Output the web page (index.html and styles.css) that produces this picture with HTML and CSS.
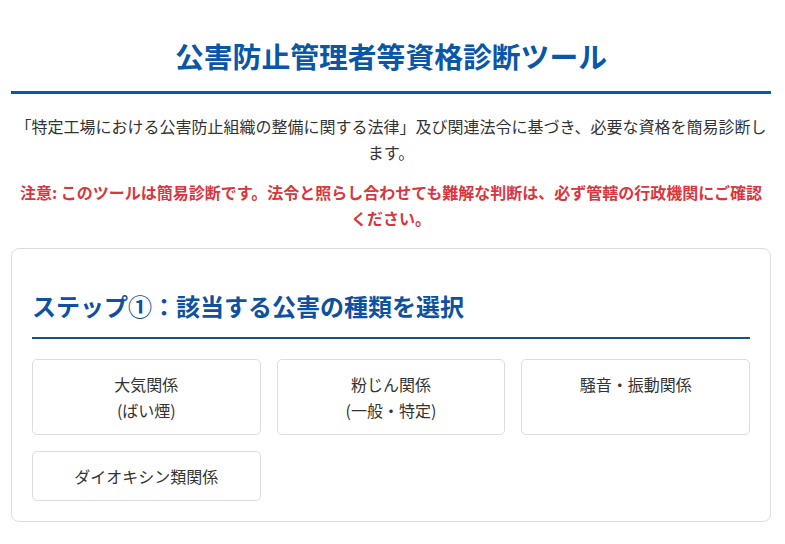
FILE: index.html
```html
<!DOCTYPE html>
<html lang="ja">
<head>
<meta charset="utf-8">
<title>公害防止管理者等資格診断ツール</title>
<link rel="stylesheet" href="styles.css">
</head>
<body>
<div class="page">
  <h1 class="title">公害防止管理者等資格診断ツール</h1>
  <p class="desc">「特定工場における公害防止組織の整備に関する法律」及び関連法令に基づき、必要な資格を簡易診断します。</p>
  <p class="warning">注意: このツールは簡易診断です。法令と照らし合わせても難解な判断は、必ず管轄の行政機関にご確認ください。</p>
  <section class="card">
    <h2 class="step-title">ステップ①：該当する公害の種類を選択</h2>
    <div class="options">
      <button class="option"><span class="option-label">大気関係<br>(ばい煙)</span></button>
      <button class="option"><span class="option-label">粉じん関係<br>(一般・特定)</span></button>
      <button class="option"><span class="option-label">騒音・振動関係</span></button>
      <button class="option"><span class="option-label">ダイオキシン類関係</span></button>
    </div>
  </section>
</div>
</body>
</html>
```

FILE: styles.css
```css
html, body {
  margin: 0;
  padding: 0;
  background: #ffffff;
}

body {
  font-family: "Noto Sans CJK JP", "Noto Sans", sans-serif;
  color: #333333;
  font-size: 16px;
}

.page {
  width: 760px;
  margin-left: 11px;
}

.title {
  margin: 0;
  padding: 36px 0 15px;
  font-size: 28.8px;
  line-height: 40px;
  font-weight: 700;
  text-align: center;
  color: #0a57a8;
  border-bottom: 3px solid #0a57a8;
}

.desc {
  margin: 20px 0 0;
  font-size: 16px;
  line-height: 25.6px;
  text-align: center;
  color: #333333;
}

.warning {
  margin: 15px 0 0;
  padding: 0 6px;
  font-size: 16px;
  line-height: 25.6px;
  font-weight: 700;
  text-align: center;
  color: #d9363e;
}

.card {
  margin-top: 17px;
  border: 1px solid #dddddd;
  border-radius: 8px;
  padding: 20px;
  background: #ffffff;
}

.step-title {
  margin: 20px 0 0;
  padding-bottom: 14px;
  font-size: 24px;
  line-height: 33.6px;
  font-weight: 700;
  color: #0d51a0;
  border-bottom: 2px solid #174f8f;
}

.options {
  margin-top: 20px;
  display: grid;
  grid-template-columns: repeat(3, 1fr);
  gap: 16px;
}

.option {
  font-family: inherit;
  font-size: 16px;
  line-height: 26px;
  color: #333333;
  background: #ffffff;
  border: 1px solid #dddddd;
  border-radius: 5px;
  padding: 11px 10px;
  margin: 0;
  width: 100%;
  display: flex;
  flex-direction: column;
  justify-content: flex-start;
  align-items: center;
  text-align: center;
}

.option-label {
  display: block;
}
```
